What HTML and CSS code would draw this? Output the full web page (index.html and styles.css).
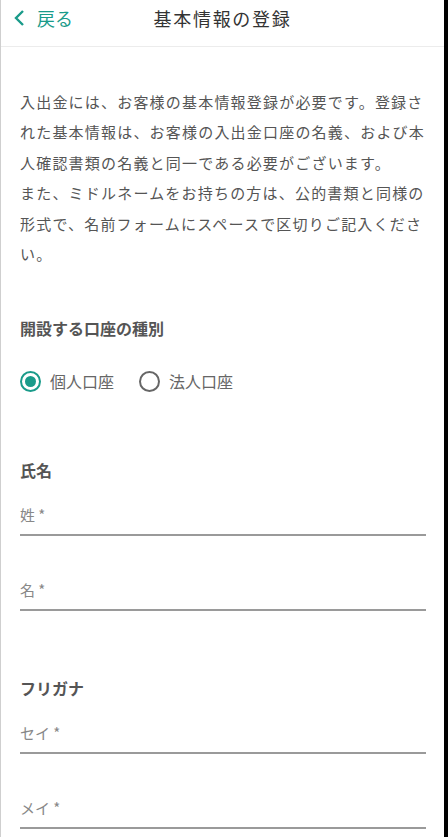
FILE: index.html
```html
<!DOCTYPE html>
<html lang="ja">
<head>
<meta charset="utf-8">
<link rel="stylesheet" href="styles.css">
</head>
<body>
<div class="screen">
  <header class="header">
    <a class="back">
      <svg class="chev" width="12" height="18" viewBox="0 0 12 18"><path d="M10 2 L3 9 L10 16" fill="none" stroke="#1a9b8a" stroke-width="2.4"/></svg>
      <span>戻る</span>
    </a>
    <h1 class="title">基本情報の登録</h1>
  </header>
  <main class="content">
    <p class="intro">入出金には、お客様の基本情報登録が必要です。登録された基本情報は、お客様の入出金口座の名義、および本人確認書類の名義と同一である必要がございます。<br>また、ミドルネームをお持ちの方は、公的書類と同様の形式で、名前フォームにスペースで区切りご記入ください。</p>

    <section class="group">
      <h2 class="label">開設する口座の種別</h2>
      <div class="radios">
        <label class="radio"><span class="dot checked"></span>個人口座</label>
        <label class="radio"><span class="dot"></span>法人口座</label>
      </div>
    </section>

    <section class="group">
      <h2 class="label">氏名</h2>
      <div class="fields">
        <div class="field">姓 *</div>
        <div class="field">名 *</div>
      </div>
    </section>

    <section class="group">
      <h2 class="label">フリガナ</h2>
      <div class="fields">
        <div class="field">セイ *</div>
        <div class="field">メイ *</div>
      </div>
    </section>
  </main>
</div>
</body>
</html>
```
FILE: styles.css
```css
html, body {
  margin: 0;
  padding: 0;
  background: #000;
  height: 100%;
}
body {
  font-family: "Noto Sans CJK JP", "Noto Sans", sans-serif;
  color: #555;
  overflow: hidden;
}
.screen {
  width: 443px;
  min-height: 837px;
  background: #fff;
  border-left: 1px solid #cfcfcf;
}
.header {
  height: 36px;
  padding-bottom: 10px;
  border-bottom: 1px solid #ececec;
  display: flex;
  align-items: center;
  position: relative;
}
.back {
  display: flex;
  align-items: center;
  gap: 12px;
  padding-left: 12px;
  color: #1a9b8a;
  font-size: 18px;
}
.title {
  position: absolute;
  left: 0;
  right: 0;
  top: 0;
  line-height: 36px;
  text-align: center;
  margin: 0;
  font-size: 18px;
  font-weight: 400;
  color: #333;
  letter-spacing: 1.7px;
  pointer-events: none;
}
.content {
  padding: 0 17px 0 19px;
}
.intro {
  margin: 40px 0 0;
  font-size: 15px;
  line-height: 30.4px;
  letter-spacing: 1.2px;
  color: #555;
}
.group {
  margin-top: 48px;
}
.group + .group {
  margin-top: 66px;
}
.label {
  margin: 0;
  font-size: 16px;
  font-weight: 700;
  color: #555;
  line-height: 22px;
}
.radios {
  display: flex;
  gap: 25px;
  margin-top: 30px;
}
.radio {
  display: flex;
  align-items: center;
  gap: 9px;
  font-size: 16px;
  color: #666;
}
.dot {
  box-sizing: border-box;
  width: 21px;
  height: 21px;
  border-radius: 50%;
  border: 2px solid #666;
  position: relative;
}
.dot.checked {
  border-color: #1a9b8a;
}
.dot.checked::after {
  content: "";
  position: absolute;
  left: 3px;
  top: 3px;
  width: 11px;
  height: 11px;
  border-radius: 50%;
  background: #1a9b8a;
}
.fields {
  display: flex;
  flex-direction: column;
  gap: 20px;
}
.field {
  font-size: 15px;
  line-height: 20px;
  color: #888;
  padding-top: 24px;
  padding-bottom: 9px;
  border-bottom: 2px solid #9a9a9a;
  margin-right: 1px;
}
```
